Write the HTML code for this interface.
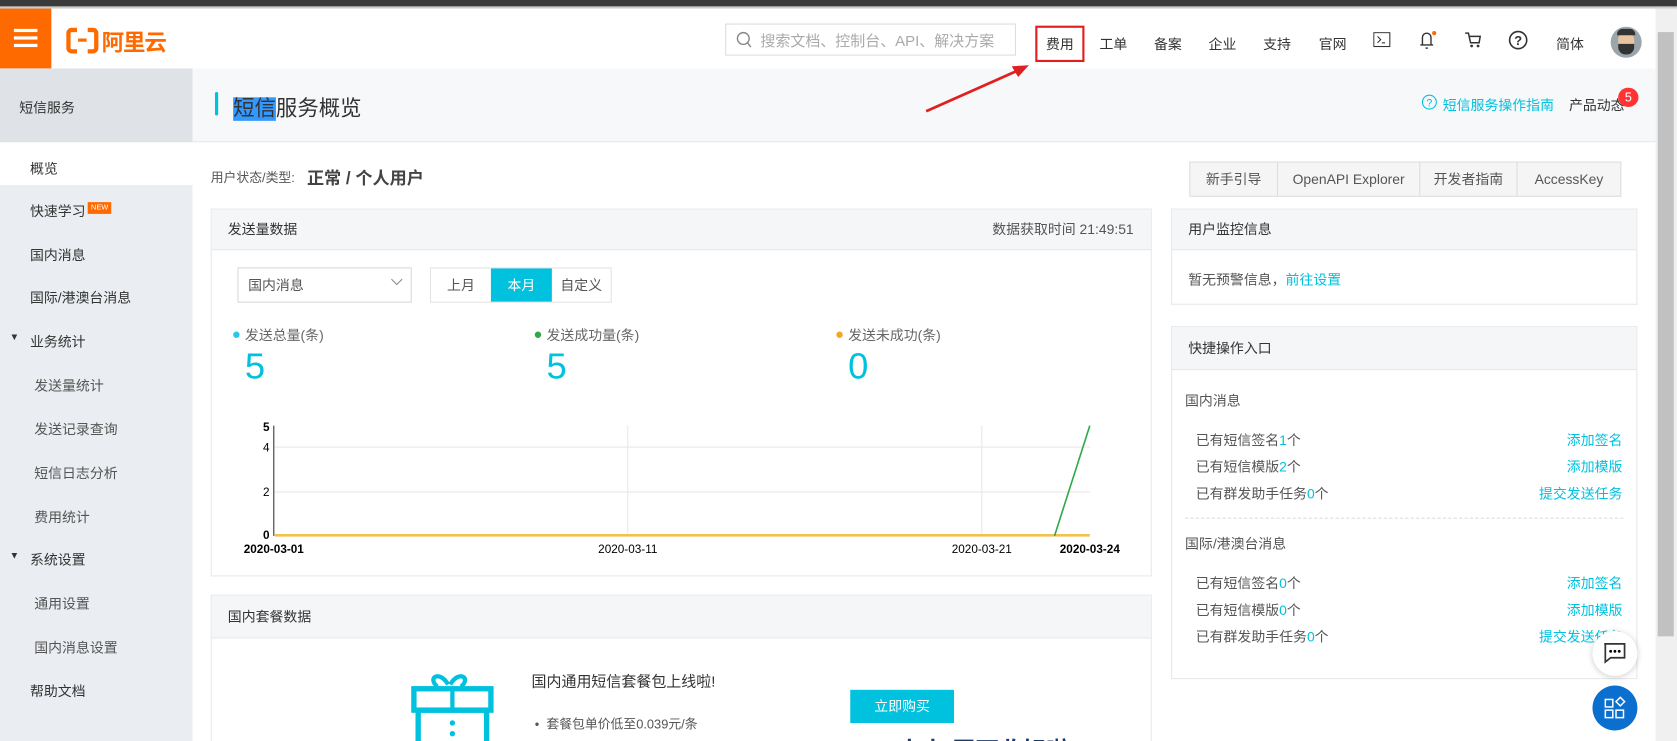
<!DOCTYPE html>
<html><head><meta charset="utf-8"><style>
*{margin:0;padding:0;box-sizing:border-box}
body{width:1677px;height:741px;overflow:hidden;background:#fff;font-family:"Liberation Sans","Noto Sans CJK SC",sans-serif;color:#333}
#w{position:absolute;left:0;top:0;width:1568px;height:693px;transform:scale(1.0695);transform-origin:0 0;background:#fff;overflow:hidden}
.a{position:absolute;white-space:nowrap}
.f13{font-size:13px}
.c{color:#00c1de}
.panel{position:absolute;border:1px solid #e6e8eb;background:#fff}
.ph{position:absolute;left:0;right:0;top:0;background:#f5f6f8;border-bottom:1px solid #e6e8eb;font-size:13px;color:#333;padding-left:15px}
</style></head><body><div id="w">
<!-- top strip -->
<div class="a" style="left:0;top:0;width:1568px;height:6px;background:#3a3a3a"></div>
<div class="a" style="left:0;top:6px;width:1568px;height:2px;background:#ccc"></div>
<!-- header -->
<div class="a" style="left:0;top:8px;width:1548px;height:56px;background:#fff;box-shadow:0 1px 3px rgba(0,0,0,.08)"></div>
<div class="a" style="left:0;top:8px;width:48px;height:56px;background:#ff6a00"></div>
<div class="a" style="left:13px;top:27px;width:22px;height:3px;background:#fff;box-shadow:0 7px 0 #fff,0 14px 0 #fff"></div>
<div class="a" style="left:62px;top:26px;width:30px;height:24px;border:4px solid #ff6a00;border-radius:5px"></div>
<div class="a" style="left:72px;top:23px;width:10px;height:30px;background:#fff"></div>
<div class="a" style="left:73px;top:36px;width:8px;height:3px;background:#ff6a00"></div>
<div class="a" style="left:95px;top:24px;font-size:21px;font-weight:bold;color:#ff6a00;letter-spacing:-1px">阿里云</div>
<div class="a" style="left:678px;top:22px;width:272px;height:30px;border:1px solid #ddd"></div>
<svg class="a" style="left:688px;top:29px" width="16" height="16"><circle cx="7" cy="7" r="5.5" fill="none" stroke="#888" stroke-width="1.3"/><line x1="11" y1="11" x2="14" y2="15" stroke="#888" stroke-width="1.3"/></svg>
<div class="a f13" style="left:711px;top:28px;color:#aaa;font-size:14px">搜索文档、控制台、API、解决方案</div>
<div class="a" style="left:968px;top:24px;width:46px;height:34px;border:2px solid #e02020"></div>
<div class="a f13" style="left:978px;top:31px">费用</div>
<div class="a f13" style="left:1028px;top:31px">工单</div>
<div class="a f13" style="left:1079px;top:31px">备案</div>
<div class="a f13" style="left:1130px;top:31px">企业</div>
<div class="a f13" style="left:1181px;top:31px">支持</div>
<div class="a f13" style="left:1233px;top:31px">官网</div>
<svg class="a" style="left:1284px;top:30px" width="17" height="15"><rect x="0.5" y="0.5" width="15" height="13" fill="none" stroke="#333"/><path d="M4 4l3 3-3 3M8 10h3" stroke="#333" fill="none"/></svg>
<svg class="a" style="left:1326px;top:28px" width="20" height="19"><path d="M4 14V7a4 4 0 0 1 8 0v7zM2 14h12M7 17h2" stroke="#333" stroke-width="1.3" fill="none"/><circle cx="15" cy="3" r="2" fill="#ff6a00"/></svg>
<svg class="a" style="left:1369px;top:30px" width="17" height="16"><path d="M1 1h3l2 9h8l1-6H5" stroke="#333" stroke-width="1.4" fill="none"/><circle cx="7" cy="13" r="1.3" fill="#333"/><circle cx="13" cy="13" r="1.3" fill="#333"/></svg>
<svg class="a" style="left:1410px;top:28px" width="19" height="19"><circle cx="9.5" cy="9.5" r="8" stroke="#333" stroke-width="1.5" fill="none"/><text x="9.5" y="14" font-size="12" text-anchor="middle" font-family="Liberation Sans" fill="#333" font-weight="bold">?</text></svg>
<div class="a f13" style="left:1455px;top:31px">简体</div>
<div class="a" style="left:1506px;top:25px;width:29px;height:29px;border-radius:50%;background:#9aa6ac;overflow:hidden"><div style="position:absolute;left:7px;top:6px;width:15px;height:18px;border-radius:6px;background:#e8c4a0"></div><div style="position:absolute;left:7px;top:16px;width:15px;height:10px;border-radius:0 0 7px 7px;background:#333"></div><div style="position:absolute;left:6px;top:2px;width:17px;height:6px;border-radius:5px 5px 0 0;background:#333"></div></div>
<!-- scrollbar -->
<div class="a" style="left:1548px;top:8px;width:20px;height:685px;background:#f0f0f0"></div>
<div class="a" style="left:1550px;top:30px;width:15px;height:565px;background:#c1c1c1"></div>
<!-- sidebar -->
<div class="a" style="left:0;top:64px;width:180px;height:629px;background:#eaedf1"></div>
<div class="a" style="left:0;top:64px;width:180px;height:69px;background:#dfe3e8"></div>
<div class="a f13" style="left:18px;top:90px;color:#333">短信服务</div>
<div class="a" style="left:0;top:133px;width:180px;height:40px;background:#fff"></div>
<div class="a f13" style="left:28px;top:147px">概览</div>
<div class="a f13" style="left:28px;top:187px">快速学习</div>
<div class="a" style="left:82px;top:189px;background:#ff6a00;color:#fff;font-size:7px;padding:2px 3px">NEW</div>
<div class="a f13" style="left:28px;top:228px">国内消息</div>
<div class="a f13" style="left:28px;top:268px">国际/港澳台消息</div>
<div class="a" style="left:9px;top:310px;font-size:9px">▼</div>
<div class="a f13" style="left:28px;top:309px">业务统计</div>
<div class="a f13" style="left:32px;top:350px;color:#555">发送量统计</div>
<div class="a f13" style="left:32px;top:391px;color:#555">发送记录查询</div>
<div class="a f13" style="left:32px;top:432px;color:#555">短信日志分析</div>
<div class="a f13" style="left:32px;top:473px;color:#555">费用统计</div>
<div class="a" style="left:9px;top:514px;font-size:9px">▼</div>
<div class="a f13" style="left:28px;top:513px">系统设置</div>
<div class="a f13" style="left:32px;top:554px;color:#555">通用设置</div>
<div class="a f13" style="left:32px;top:595px;color:#555">国内消息设置</div>
<div class="a f13" style="left:28px;top:636px">帮助文档</div>
<!-- title bar -->
<div class="a" style="left:180px;top:64px;width:1368px;height:69px;background:#f7f8fa;border-bottom:1px solid #e8e8e8"></div>
<div class="a" style="left:201px;top:86px;width:3px;height:22px;background:#00c1de;border-radius:2px"></div>
<div class="a" style="left:218px;top:85px;font-size:20px;color:#333"><span style="background:#3399ff;color:#333">短信</span>服务概览</div>
<svg class="a" style="left:1329px;top:88px" width="15" height="15"><circle cx="7.5" cy="7.5" r="6.5" stroke="#00c1de" fill="none"/><text x="7.5" y="11.5" font-size="10" text-anchor="middle" fill="#00c1de" font-family="Liberation Sans">?</text></svg>
<div class="a f13 c" style="left:1349px;top:88px">短信服务操作指南</div>
<div class="a f13" style="left:1467px;top:88px">产品动态</div>
<div class="a" style="left:1513px;top:82px;width:19px;height:18px;border-radius:50%;background:#f33;color:#fff;font-size:12px;text-align:center;line-height:18px">5</div>
<!-- user status -->
<div class="a" style="left:197px;top:157px;font-size:12px;color:#555">用户状态/类型:</div>
<div class="a" style="left:287px;top:153px;font-size:16px;font-weight:bold;color:#444">正常 / 个人用户</div>
<div class="a" style="left:1112px;top:151px;width:404px;height:33px;background:#f5f5f5;border:1px solid #ddd;display:flex;font-size:13px;color:#555">
<div style="width:82px;text-align:center;line-height:31px;border-right:1px solid #ddd">新手引导</div>
<div style="width:133px;text-align:center;line-height:31px;border-right:1px solid #ddd">OpenAPI Explorer</div>
<div style="width:91px;text-align:center;line-height:31px;border-right:1px solid #ddd">开发者指南</div>
<div style="flex:1;text-align:center;line-height:31px">AccessKey</div></div>
<!-- panel 1 -->
<div class="panel" style="left:197px;top:195px;width:880px;height:344px">
<div class="ph" style="height:38px;line-height:38px">发送量数据<span style="position:absolute;right:16px;color:#555">数据获取时间 21:49:51</span></div>
</div>
<div class="a" style="left:222px;top:250px;width:163px;height:33px;border:1px solid #d8d8d8;font-size:13px;color:#555;line-height:31px;padding-left:9px">国内消息</div>
<svg class="a" style="left:365px;top:260px" width="12" height="8"><path d="M1 1l5 5 5-5" stroke="#888" fill="none"/></svg>
<div class="a" style="left:402px;top:250px;width:170px;height:33px;border:1px solid #e3e3e3;font-size:13px;color:#555;display:flex;line-height:31px">
<div style="width:56px;text-align:center">上月</div><div style="width:57px;text-align:center;background:#00c1de;color:#fff">本月</div><div style="flex:1;text-align:center">自定义</div></div>
<div class="a" style="left:218px;top:310px;width:6px;height:6px;border-radius:50%;background:#2bc6ef"></div>
<div class="a f13" style="left:229px;top:303px;color:#666">发送总量(条)</div>
<div class="a" style="left:500px;top:310px;width:6px;height:6px;border-radius:50%;background:#2ea94a"></div>
<div class="a f13" style="left:511px;top:303px;color:#666">发送成功量(条)</div>
<div class="a" style="left:782px;top:310px;width:6px;height:6px;border-radius:50%;background:#f5a623"></div>
<div class="a f13" style="left:793px;top:303px;color:#666">发送未成功(条)</div>
<div class="a c" style="left:229px;top:324px;font-size:34px">5</div>
<div class="a c" style="left:511px;top:324px;font-size:34px">5</div>
<div class="a c" style="left:793px;top:324px;font-size:34px">0</div>
<svg class="a" style="left:210px;top:390px" width="860" height="130" font-family="Liberation Sans" font-size="11">
<line x1="47" y1="28" x2="809" y2="28" stroke="#e8e8e8"/>
<line x1="47" y1="70" x2="809" y2="70" stroke="#e8e8e8"/>
<line x1="377" y1="8" x2="377" y2="110" stroke="#e8e8e8"/>
<line x1="708" y1="8" x2="708" y2="110" stroke="#e8e8e8"/>
<line x1="46" y1="8" x2="46" y2="111" stroke="#333"/>
<line x1="47" y1="110.5" x2="809" y2="110.5" stroke="#f2c14e" stroke-width="2.5"/>
<line x1="776" y1="111" x2="809" y2="8" stroke="#2ea94a" stroke-width="1.5"/>
<text x="42" y="13" text-anchor="end" font-weight="bold">5</text>
<text x="42" y="32" text-anchor="end">4</text>
<text x="42" y="74" text-anchor="end">2</text>
<text x="42" y="114" text-anchor="end" font-weight="bold">0</text>
<text x="46" y="127" text-anchor="middle" font-weight="bold">2020-03-01</text>
<text x="377" y="127" text-anchor="middle">2020-03-11</text>
<text x="708" y="127" text-anchor="middle">2020-03-21</text>
<text x="809" y="127" text-anchor="middle" font-weight="bold">2020-03-24</text>
</svg>
<!-- panel 2 -->
<div class="panel" style="left:197px;top:556px;width:880px;height:150px">
<div class="ph" style="height:40px;line-height:40px">国内套餐数据</div></div>
<svg class="a" style="left:383px;top:628px" width="80" height="70"><path d="M30 12c-8-14-20-6-10 2M32 12c8-14 20-6 10 2" stroke="#00c1de" stroke-width="4" fill="none" transform="translate(6,0)"/><rect x="4" y="16" width="72" height="20" stroke="#00c1de" stroke-width="5" fill="none"/><rect x="8" y="36" width="64" height="40" stroke="#00c1de" stroke-width="5" fill="none"/><line x1="40" y1="16" x2="40" y2="36" stroke="#00c1de" stroke-width="4"/><circle cx="40" cy="48" r="2.5" fill="#00c1de"/><circle cx="40" cy="58" r="2.5" fill="#00c1de"/></svg>
<div class="a" style="left:497px;top:627px;font-size:14px;color:#333">国内通用短信套餐包上线啦!</div>
<div class="a" style="left:500px;top:668px;font-size:12px;color:#555">•&nbsp; 套餐包单价低至0.039元/条</div>
<div class="a" style="left:795px;top:645px;width:97px;height:31px;background:#00c1de;color:#fff;font-size:13px;text-align:center;line-height:31px">立即购买</div>
<div class="a" style="left:840px;top:684px;font-size:22px;font-weight:bold;color:#1a3a6e">上上 严下收好啦</div>
<!-- right panel 1 -->
<div class="panel" style="left:1095px;top:195px;width:436px;height:90px">
<div class="ph" style="height:38px;line-height:38px">用户监控信息</div></div>
<div class="a f13" style="left:1111px;top:251px;color:#555">暂无预警信息，<span class="c">前往设置</span></div>
<!-- right panel 2 -->
<div class="panel" style="left:1095px;top:305px;width:436px;height:330px">
<div class="ph" style="height:40px;line-height:40px">快捷操作入口</div></div>
<div class="a f13" style="left:1108px;top:364px;color:#555">国内消息</div>
<div class="a f13" style="left:1118px;top:401px;color:#555">已有短信签名<span class="c">1</span>个</div>
<div class="a f13" style="left:1118px;top:426px;color:#555">已有短信模版<span class="c">2</span>个</div>
<div class="a f13" style="left:1118px;top:451px;color:#555">已有群发助手任务<span class="c">0</span>个</div>
<div class="a f13 c" style="right:51px;top:401px">添加签名</div>
<div class="a f13 c" style="right:51px;top:426px">添加模版</div>
<div class="a f13 c" style="right:51px;top:451px">提交发送任务</div>
<div class="a" style="left:1108px;top:484px;width:410px;border-top:1px dashed #ddd"></div>
<div class="a f13" style="left:1108px;top:498px;color:#555">国际/港澳台消息</div>
<div class="a f13" style="left:1118px;top:535px;color:#555">已有短信签名<span class="c">0</span>个</div>
<div class="a f13" style="left:1118px;top:560px;color:#555">已有短信模版<span class="c">0</span>个</div>
<div class="a f13" style="left:1118px;top:585px;color:#555">已有群发助手任务<span class="c">0</span>个</div>
<div class="a f13 c" style="right:51px;top:535px">添加签名</div>
<div class="a f13 c" style="right:51px;top:560px">添加模版</div>
<div class="a f13 c" style="right:51px;top:585px">提交发送任务</div>
<!-- floating -->
<div class="a" style="left:1489px;top:590px;width:42px;height:42px;border-radius:50%;background:#fff;box-shadow:0 1px 6px rgba(0,0,0,.2)"></div>
<svg class="a" style="left:1499px;top:601px" width="22" height="20"><path d="M1 1h19v13H7l-5 4V1z" stroke="#333" stroke-width="1.6" fill="none"/><circle cx="7" cy="8" r="1.3"/><circle cx="11" cy="8" r="1.3"/><circle cx="15" cy="8" r="1.3"/></svg>
<div class="a" style="left:1489px;top:641px;width:42px;height:42px;border-radius:50%;background:#0b6fcf"></div>
<svg class="a" style="left:1500px;top:651px" width="22" height="22"><rect x="1" y="3" width="7" height="7" stroke="#fff" fill="none" stroke-width="1.4"/><rect x="1" y="13" width="7" height="7" stroke="#fff" fill="none" stroke-width="1.4"/><rect x="11" y="13" width="7" height="7" stroke="#fff" fill="none" stroke-width="1.4"/><path d="M15 1l4 4-4 4-4-4z" stroke="#fff" fill="none" stroke-width="1.4"/></svg>
<!-- red arrow -->
<svg class="a" style="left:860px;top:55px" width="110" height="55"><line x1="6" y1="49" x2="96" y2="9" stroke="#e02020" stroke-width="2.5"/><path d="M102 6l-16 1 6 10z" fill="#e02020"/></svg>
</div></body></html>
